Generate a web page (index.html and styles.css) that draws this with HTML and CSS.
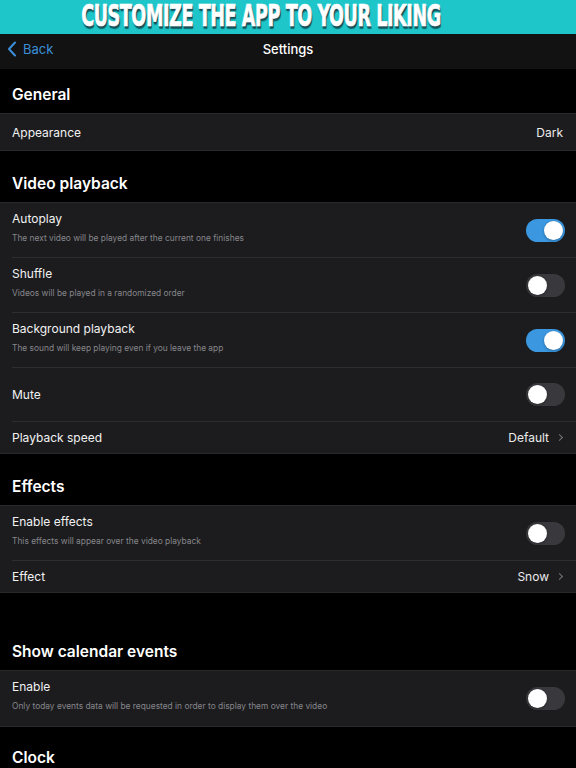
FILE: index.html
```html
<!DOCTYPE html>
<html lang="en">

<head>
    <meta charset="UTF-8">
    <meta name="viewport" content="width=device-width, initial-scale=1.0">
    <title>Settings</title>
    <link rel="stylesheet" href="styles.css">
</head>

<body>
    <div class="banner"><span>CUSTOMIZE THE APP TO YOUR LIKING</span></div>

    <div class="navbar">
        <a class="back">
            <svg width="10" height="16" viewBox="0 0 10 16"><path d="M8 1.5 L2 8 L8 14.5" fill="none" stroke="#3b8fd8" stroke-width="2" stroke-linecap="round" stroke-linejoin="round"/></svg>
            Back
        </a>
        <div class="title">Settings</div>
    </div>

    <div class="group-title first">General</div>
    <ul class="group">
        <li class="row tall">
            <div class="label">Appearance</div>
            <div class="value">Dark</div>
        </li>
    </ul>

    <div class="group-title">Video playback</div>
    <ul class="group">
        <li class="row double">
            <div class="text">
                <div class="label">Autoplay</div>
                <div class="hint">The next video will be played after the current one finishes</div>
            </div>
            <span class="switch on"></span>
        </li>
        <li class="row double">
            <div class="text">
                <div class="label">Shuffle</div>
                <div class="hint">Videos will be played in a randomized order</div>
            </div>
            <span class="switch"></span>
        </li>
        <li class="row double">
            <div class="text">
                <div class="label">Background playback</div>
                <div class="hint">The sound will keep playing even if you leave the app</div>
            </div>
            <span class="switch on"></span>
        </li>
        <li class="row double short">
            <div class="label">Mute</div>
            <span class="switch"></span>
        </li>
        <li class="row">
            <div class="label">Playback speed</div>
            <div class="value">Default <i class="chevron"></i></div>
        </li>
    </ul>

    <div class="group-title">Effects</div>
    <ul class="group">
        <li class="row double">
            <div class="text">
                <div class="label">Enable effects</div>
                <div class="hint">This effects will appear over the video playback</div>
            </div>
            <span class="switch"></span>
        </li>
        <li class="row">
            <div class="label">Effect</div>
            <div class="value">Snow <i class="chevron"></i></div>
        </li>
    </ul>

    <div class="group-title spaced">Show calendar events</div>
    <ul class="group">
        <li class="row double">
            <div class="text">
                <div class="label">Enable</div>
                <div class="hint">Only today events data will be requested in order to display them over the video</div>
            </div>
            <span class="switch"></span>
        </li>
    </ul>

    <div class="group-title last">Clock</div>
</body>

</html>
```

FILE: styles.css
```css
* {
    padding: 0;
    margin: 0;
    box-sizing: border-box;
}

ul {
    list-style-type: none;
}

body {
    background-color: #000;
    color: #fff;
    font-family: Inter, "Noto Sans", sans-serif;
    width: 576px;
    height: 768px;
    overflow: hidden;
}

.banner {
    height: 34px;
    padding-right: 55px;
    background-color: #1ec6c9;
    text-align: center;
    overflow: hidden;
}

.banner span {
    display: inline-block;
    margin-top: 5px;
    font-family: "DejaVu Sans Condensed", "DejaVu Sans", sans-serif;
    font-stretch: condensed;
    font-weight: bold;
    font-size: 22px;
    line-height: 24px;
    letter-spacing: -0.5px;
    color: #fff;
    -webkit-text-stroke: 0.5px #fff;
    transform: scale(0.89, 1.33);
    text-shadow: 1px 1px 0 #1a4f5a, 1px 2px 1px rgba(0, 0, 0, 0.5);
}

.navbar {
    position: relative;
    height: 35px;
    padding-top: 7px;
    background-color: #121212;
    display: flex;
    justify-content: center;
}

.navbar .back {
    position: absolute;
    left: 7px;
    top: 7px;
    display: flex;
    align-items: center;
    gap: 6px;
    color: #3b8fd8;
    font-size: 13px;
    line-height: 16px;
}

.navbar .title {
    font-size: 13px;
    line-height: 16px;
    font-weight: 500;
}

.group-title {
    padding: 22px 12px 7px;
    font-size: 15.5px;
    line-height: 22px;
    font-weight: 600;
}

.group-title.first {
    padding-top: 15px;
}

.group-title.spaced {
    padding-top: 48px;
}

.group-title.last {
    padding-top: 20px;
}

.group {
    background-color: #1c1c1e;
    border-top: 1px solid #29292b;
    border-bottom: 1px solid #29292b;
}

.row {
    display: flex;
    align-items: center;
    justify-content: space-between;
    height: 32px;
    margin-left: 12px;
    padding-right: 11px;
    border-bottom: 1px solid #2d2d2f;
}

.row:last-child {
    border-bottom: none;
    height: 31px;
}

.row.tall {
    height: 36px;
}

.row.double {
    height: 55px;
}

.row.double.short {
    height: 54px;
}

.text {
    padding-bottom: 7px;
}

.label {
    font-size: 12px;
    color: #f2f2f2;
}

.hint {
    margin-top: 7px;
    font-size: 8.4px;
    color: #86868b;
}

.value {
    display: flex;
    align-items: center;
    gap: 8px;
    font-size: 12px;
    color: #ebebeb;
}

.tall .value {
    margin-right: 2px;
}

.chevron {
    width: 5px;
    height: 5px;
    margin-right: 3px;
    border-top: 1.3px solid #76767a;
    border-right: 1.3px solid #76767a;
    transform: rotate(45deg);
}

.switch {
    position: relative;
    width: 39px;
    height: 23px;
    border-radius: 12px;
    background-color: #39393d;
}

.switch::after {
    content: "";
    position: absolute;
    left: 2px;
    top: 2px;
    width: 19px;
    height: 19px;
    border-radius: 50%;
    background-color: #fff;
    box-shadow: 0 1px 3px rgba(0, 0, 0, 0.3);
}

.switch.on {
    background-color: #3a97e0;
}

.switch.on::after {
    left: 18px;
}
```
